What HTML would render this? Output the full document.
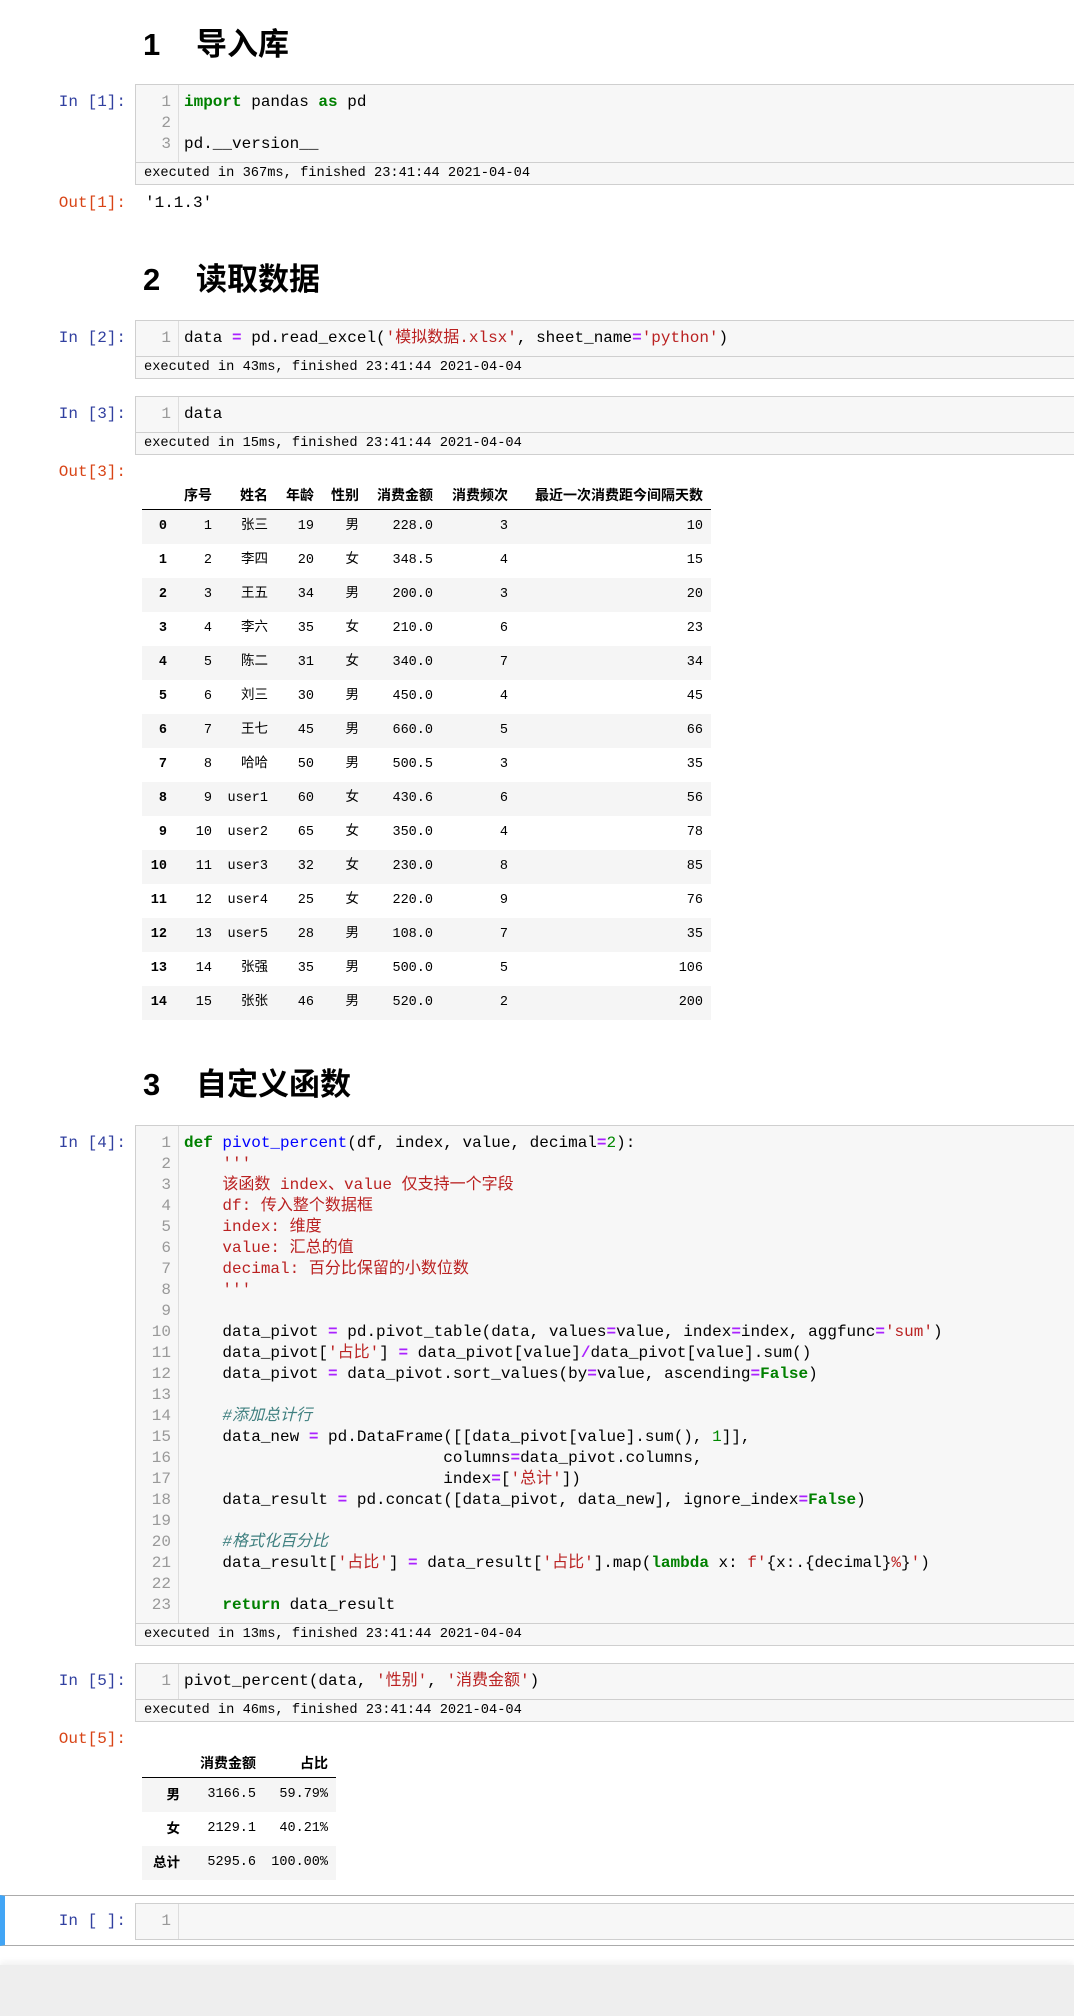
<!DOCTYPE html>
<html><head><meta charset="utf-8">
<style>
*{margin:0;padding:0;box-sizing:border-box}
html,body{width:1074px;height:2016px;background:#fff;overflow:hidden;position:relative}
body{font-family:"Liberation Sans","Noto Sans CJK SC",sans-serif;color:#000}
.mono{font-family:"Liberation Mono","Noto Sans CJK SC",monospace}
.h{position:absolute;left:143px;font-weight:bold;font-size:31px;line-height:40px;font-family:"Liberation Sans","Noto Sans CJK SC",sans-serif}
.h .t{position:absolute;left:53px;top:0;white-space:nowrap}
.pr{position:absolute;right:948px;font-family:"Liberation Mono",monospace;font-size:16px;line-height:21px;white-space:pre;color:#303F9F}
.po{color:#D84315}
.cell{position:absolute;left:135px;width:945px;border:1px solid #cfcfcf;background:#f7f7f7}
.code{position:relative;padding:7px 0 7px 0}
.gut{position:absolute;left:0;top:0;bottom:0;width:43px;border-right:1px solid #ddd;background:#f7f7f7}
.ln{position:relative;height:21px;line-height:21px;font-family:"Liberation Mono","Noto Sans CJK SC",monospace;font-size:16px;white-space:pre}
.ln .n{position:absolute;left:0;width:35px;text-align:right;color:#999}
.ln .c{position:absolute;left:48px}
.exec{border-top:1px solid #cfcfcf;height:22px;line-height:21px;padding-left:8px;font-family:"Liberation Mono",monospace;font-size:13.7px;color:#000;white-space:pre}
.k{color:#008000;font-weight:bold}
.s{color:#BA2121}
.o{color:#AA22FF;font-weight:bold}
.m{color:#080}
.cm{color:#408080;font-style:italic}
.fn{color:#0000FF}
.tbl{position:absolute;left:142px}
.row{position:relative;height:34px;font-family:"Liberation Mono","Noto Sans CJK SC",monospace;font-size:13.5px;line-height:34px}
.row span{position:absolute;white-space:nowrap;text-align:right}
.row.g{background:#f5f5f5}
.row.hd{height:30px;line-height:30px;font-weight:bold;border-bottom:1.5px solid #000;font-family:"Liberation Sans","Noto Sans CJK SC",sans-serif;font-size:14px}
.b{font-weight:bold}
</style></head><body>

<div class="h" style="top:25px">1<span class="t">导入库</span></div>

<div class="pr" style="top:92px">In [1]:</div>
<div class="cell" style="top:84px">
 <div class="code"><div class="gut"></div>
  <div class="ln"><span class="n">1</span><span class="c"><span class="k">import</span> pandas <span class="k">as</span> pd</span></div>
  <div class="ln"><span class="n">2</span><span class="c"></span></div>
  <div class="ln"><span class="n">3</span><span class="c">pd.__version__</span></div>
 </div>
 <div class="exec">executed in 367ms, finished 23:41:44 2021-04-04</div>
</div>
<div class="pr po" style="top:193px">Out[1]:</div>
<div class="mono" style="position:absolute;left:145px;top:193px;font-size:16px;line-height:21px">'1.1.3'</div>

<div class="h" style="top:260px">2<span class="t">读取数据</span></div>

<div class="pr" style="top:328px">In [2]:</div>
<div class="cell" style="top:320px">
 <div class="code"><div class="gut"></div>
  <div class="ln"><span class="n">1</span><span class="c">data <span class="o">=</span> pd.read_excel(<span class="s">'模拟数据.xlsx'</span>, sheet_name<span class="o">=</span><span class="s">'python'</span>)</span></div>
 </div>
 <div class="exec">executed in 43ms, finished 23:41:44 2021-04-04</div>
</div>

<div class="pr" style="top:404px">In [3]:</div>
<div class="cell" style="top:396px">
 <div class="code"><div class="gut"></div>
  <div class="ln"><span class="n">1</span><span class="c">data</span></div>
 </div>
 <div class="exec">executed in 15ms, finished 23:41:44 2021-04-04</div>
</div>
<div class="pr po" style="top:462px">Out[3]:</div>

<div class="tbl" style="top:480px;width:569px">
 <div class="row hd"><span style="right:499px">序号</span><span style="right:443px">姓名</span><span style="right:397px">年龄</span><span style="right:352px">性别</span><span style="right:278px">消费金额</span><span style="right:203px">消费频次</span><span style="right:8px">最近一次消费距今间隔天数</span></div>
 <div id="rows"></div>
</div>

<div class="h" style="top:1065px">3<span class="t">自定义函数</span></div>

<div class="pr" style="top:1133px">In [4]:</div>
<div class="cell" style="top:1125px">
 <div class="code"><div class="gut"></div>
  <div class="ln"><span class="n">1</span><span class="c"><span class="k">def</span> <span class="fn">pivot_percent</span>(df, index, value, decimal<span class="o">=</span><span class="m">2</span>):</span></div>
  <div class="ln"><span class="n">2</span><span class="c"><span class="s">    '''</span></span></div>
  <div class="ln"><span class="n">3</span><span class="c"><span class="s">    该函数 index、value 仅支持一个字段</span></span></div>
  <div class="ln"><span class="n">4</span><span class="c"><span class="s">    df: 传入整个数据框</span></span></div>
  <div class="ln"><span class="n">5</span><span class="c"><span class="s">    index: 维度</span></span></div>
  <div class="ln"><span class="n">6</span><span class="c"><span class="s">    value: 汇总的值</span></span></div>
  <div class="ln"><span class="n">7</span><span class="c"><span class="s">    decimal: 百分比保留的小数位数</span></span></div>
  <div class="ln"><span class="n">8</span><span class="c"><span class="s">    '''</span></span></div>
  <div class="ln"><span class="n">9</span><span class="c"></span></div>
  <div class="ln"><span class="n">10</span><span class="c">    data_pivot <span class="o">=</span> pd.pivot_table(data, values<span class="o">=</span>value, index<span class="o">=</span>index, aggfunc<span class="o">=</span><span class="s">'sum'</span>)</span></div>
  <div class="ln"><span class="n">11</span><span class="c">    data_pivot[<span class="s">'占比'</span>] <span class="o">=</span> data_pivot[value]<span class="o">/</span>data_pivot[value].sum()</span></div>
  <div class="ln"><span class="n">12</span><span class="c">    data_pivot <span class="o">=</span> data_pivot.sort_values(by<span class="o">=</span>value, ascending<span class="o">=</span><span class="k">False</span>)</span></div>
  <div class="ln"><span class="n">13</span><span class="c"></span></div>
  <div class="ln"><span class="n">14</span><span class="c">    <span class="cm">#添加总计行</span></span></div>
  <div class="ln"><span class="n">15</span><span class="c">    data_new <span class="o">=</span> pd.DataFrame([[data_pivot[value].sum(), <span class="m">1</span>]],</span></div>
  <div class="ln"><span class="n">16</span><span class="c">                           columns<span class="o">=</span>data_pivot.columns,</span></div>
  <div class="ln"><span class="n">17</span><span class="c">                           index<span class="o">=</span>[<span class="s">'总计'</span>])</span></div>
  <div class="ln"><span class="n">18</span><span class="c">    data_result <span class="o">=</span> pd.concat([data_pivot, data_new], ignore_index<span class="o">=</span><span class="k">False</span>)</span></div>
  <div class="ln"><span class="n">19</span><span class="c"></span></div>
  <div class="ln"><span class="n">20</span><span class="c">    <span class="cm">#格式化百分比</span></span></div>
  <div class="ln"><span class="n">21</span><span class="c">    data_result[<span class="s">'占比'</span>] <span class="o">=</span> data_result[<span class="s">'占比'</span>].map(<span class="k">lambda</span> x: <span class="s">f'</span>{x:.{decimal}<span class="s">%</span>}<span class="s">'</span>)</span></div>
  <div class="ln"><span class="n">22</span><span class="c"></span></div>
  <div class="ln"><span class="n">23</span><span class="c">    <span class="k">return</span> data_result</span></div>
 </div>
 <div class="exec">executed in 13ms, finished 23:41:44 2021-04-04</div>
</div>

<div class="pr" style="top:1671px">In [5]:</div>
<div class="cell" style="top:1663px">
 <div class="code"><div class="gut"></div>
  <div class="ln"><span class="n">1</span><span class="c">pivot_percent(data, <span class="s">'性别'</span>, <span class="s">'消费金额'</span>)</span></div>
 </div>
 <div class="exec">executed in 46ms, finished 23:41:44 2021-04-04</div>
</div>
<div class="pr po" style="top:1729px">Out[5]:</div>

<div class="tbl" style="top:1748px;width:194px">
 <div class="row hd"><span style="right:80px">消费金额</span><span style="right:8px">占比</span></div>
 <div class="row g"><span class="b" style="right:156px;font-family:'Liberation Sans','Noto Sans CJK SC',sans-serif">男</span><span style="right:80px">3166.5</span><span style="right:8px">59.79%</span></div>
 <div class="row"><span class="b" style="right:156px;font-family:'Liberation Sans','Noto Sans CJK SC',sans-serif">女</span><span style="right:80px">2129.1</span><span style="right:8px">40.21%</span></div>
 <div class="row g"><span class="b" style="right:156px;font-family:'Liberation Sans','Noto Sans CJK SC',sans-serif">总计</span><span style="right:80px">5295.6</span><span style="right:8px">100.00%</span></div>
</div>

<div style="position:absolute;left:0;top:1895px;width:1074px;height:51px;border-top:1px solid #ababab;border-bottom:1px solid #ababab;border-left:5px solid #42A5F5;background:#fff"></div>
<div class="pr" style="top:1911px">In [ ]:</div>
<div class="cell" style="top:1903px;height:37px">
 <div class="code"><div class="gut"></div>
  <div class="ln"><span class="n">1</span><span class="c"></span></div>
 </div>
</div>
<div style="position:absolute;left:0;top:1965px;width:1074px;height:51px;background:#eeeeee;box-shadow:0 -3px 6px rgba(0,0,0,0.06)"></div>

<script>
var d=[[1,'张三',19,'男','228.0',3,10],[2,'李四',20,'女','348.5',4,15],[3,'王五',34,'男','200.0',3,20],[4,'李六',35,'女','210.0',6,23],[5,'陈二',31,'女','340.0',7,34],[6,'刘三',30,'男','450.0',4,45],[7,'王七',45,'男','660.0',5,66],[8,'哈哈',50,'男','500.5',3,35],[9,'user1',60,'女','430.6',6,56],[10,'user2',65,'女','350.0',4,78],[11,'user3',32,'女','230.0',8,85],[12,'user4',25,'女','220.0',9,76],[13,'user5',28,'男','108.0',7,35],[14,'张强',35,'男','500.0',5,106],[15,'张张',46,'男','520.0',2,200]];
var r=[544,499,443,397,352,278,203,8],h='';
d.forEach(function(x,i){h+='<div class="row'+(i%2==0?' g':'')+'"><span class="b" style="right:'+r[0]+'px">'+i+'</span>';for(var j=0;j<7;j++)h+='<span style="right:'+r[j+1]+'px">'+x[j]+'</span>';h+='</div>';});
document.getElementById('rows').innerHTML=h;
</script>
</body></html>
